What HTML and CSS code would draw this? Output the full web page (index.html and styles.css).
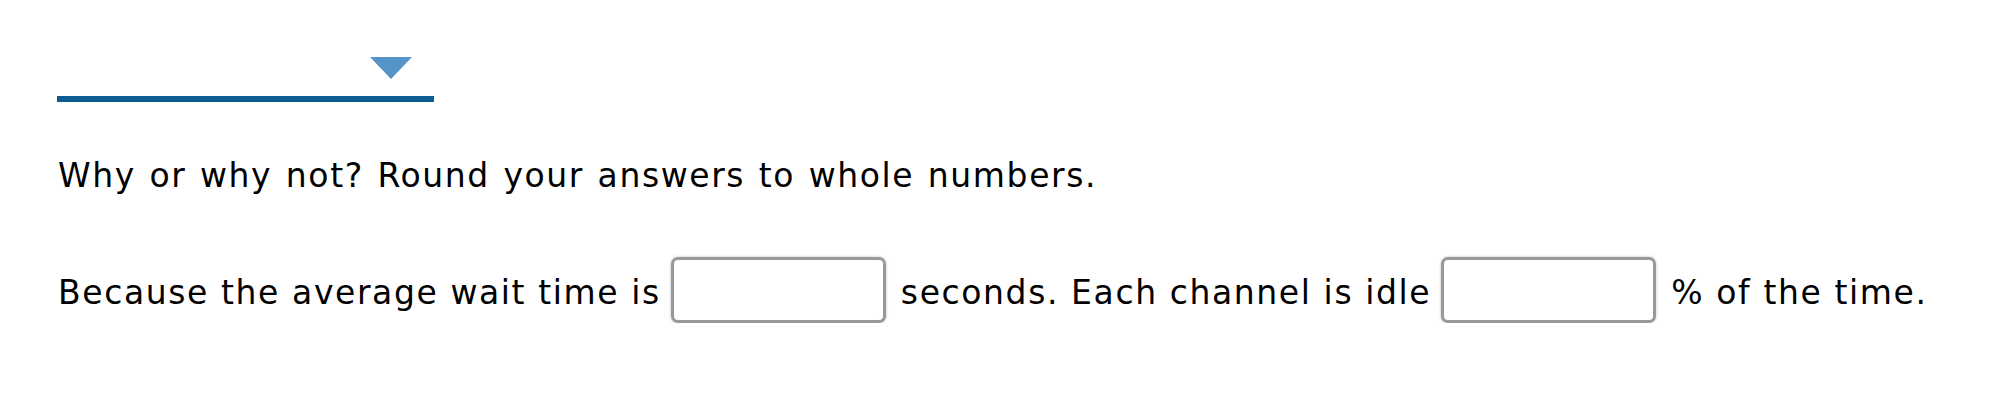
FILE: index.html
```html
<!DOCTYPE html>
<html>
<head>
<meta charset="utf-8">
<link rel="stylesheet" href="styles.css">
</head>
<body>
<div class="page">
  <div class="select">
    <span class="arrow"></span>
  </div>
  <p class="question">Why or why not? Round your answers to whole numbers.</p>
  <div class="answer">
    <span class="txt">Because the average wait time is</span>
    <input class="box" type="text">
    <span class="txt">seconds. Each channel is idle</span>
    <input class="box" type="text">
    <span class="txt">% of the time.</span>
  </div>
</div>
</body>
</html>
```
FILE: styles.css
```css
html, body {
  margin: 0;
  padding: 0;
  background: #fff;
}
.page {
  padding: 57px 0 0 58px;
  font-family: "DejaVu Sans", Verdana, sans-serif;
  font-size: 33px;
  letter-spacing: 1.6px;
  color: #000;
}
.select {
  width: 355px;
  height: 39px;
  border-bottom: 6px solid #0e5c94;
  display: flex;
  justify-content: flex-end;
  padding-right: 22px;
  margin-left: -1px;
}
.arrow {
  width: 0;
  height: 0;
  border-left: 21px solid transparent;
  border-right: 21px solid transparent;
  border-top: 22px solid #5494c8;
}
.question {
  margin: 56px 0 0 0;
  line-height: 36px;
  word-spacing: 1.5px;
}
.answer {
  margin: 63px 0 0 0;
  display: flex;
  align-items: center;
  white-space: nowrap;
}
.txt {
  padding-top: 4px;
}
.box {
  width: 215px;
  height: 66px;
  box-sizing: border-box;
  border: 3px solid #999;
  border-radius: 7px;
  box-shadow: 0 0 3px rgba(0,0,0,0.25);
  margin: 0 15px 0 10px;
  padding: 0;
  font: inherit;
  background: #fff;
}
```
